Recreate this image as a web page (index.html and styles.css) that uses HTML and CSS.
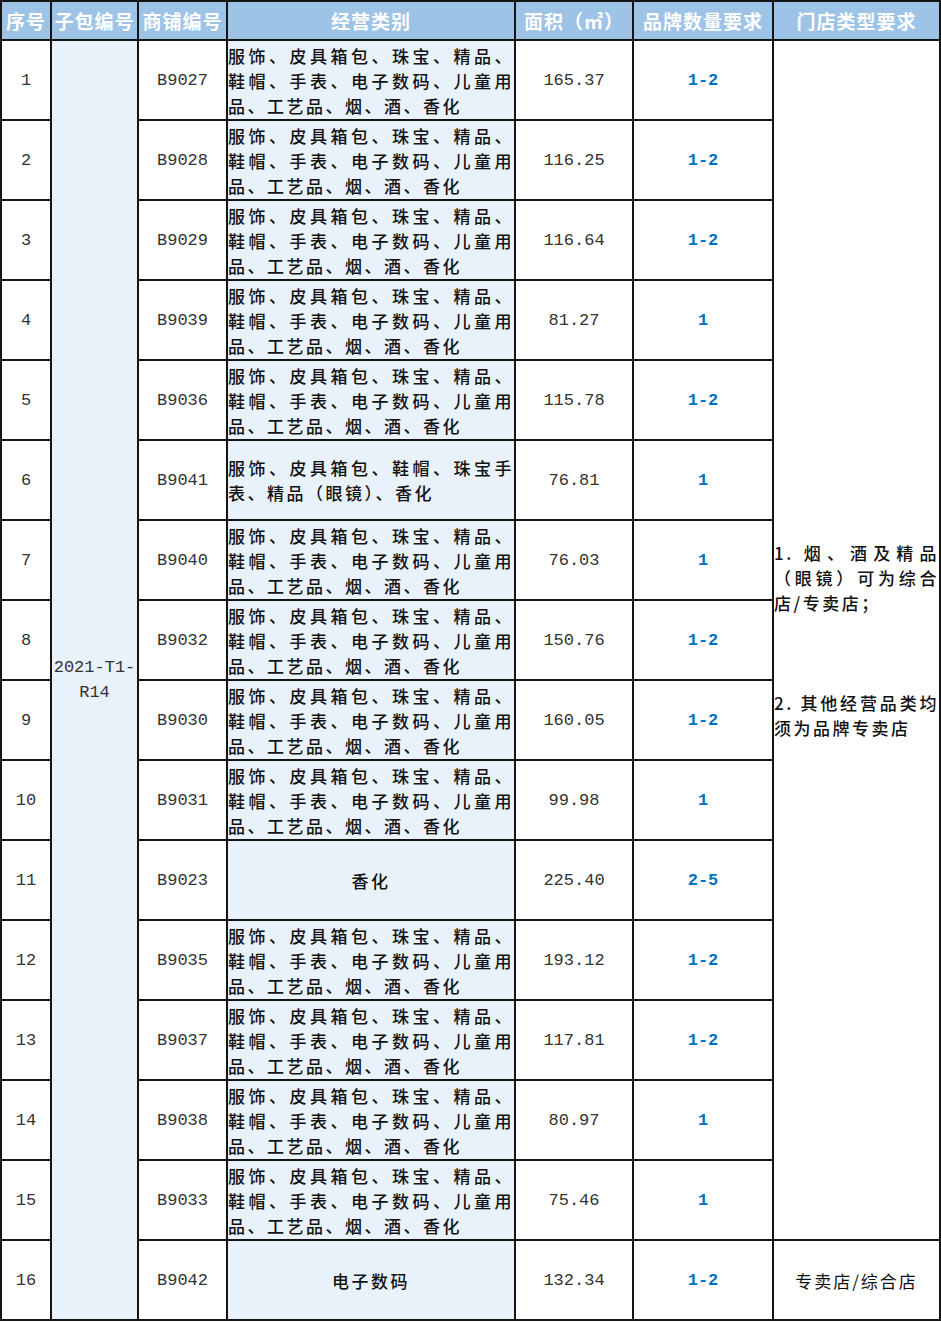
FILE: index.html
```html
<!DOCTYPE html>
<html lang="zh-CN">
<head>
<meta charset="utf-8">
<title>商铺招商表</title>
<link rel="stylesheet" href="styles.css">
</head>
<body>
<table class="grid">
  <colgroup>
    <col class="c-no">
    <col class="c-pkg">
    <col class="c-shop">
    <col class="c-cat">
    <col class="c-area">
    <col class="c-brand">
    <col class="c-type">
  </colgroup>
  <thead>
    <tr class="head">
      <th>序号</th><th>子包编号</th><th>商铺编号</th><th>经营类别</th><th>面积（㎡）</th><th>品牌数量要求</th><th>门店类型要求</th>
    </tr>
  </thead>
  <tbody>
    <tr>
      <td class="num">1</td>
      <td class="num pkg" rowspan="16">2021-T1-R14</td>
      <td class="num">B9027</td>
      <td class="cat">服饰、皮具箱包、珠宝、精品、鞋帽、手表、电子数码、儿童用品、工艺品、烟、酒、香化</td>
      <td class="num">165.37</td>
      <td class="num brand">1-2</td>
      <td class="type" rowspan="15">
        <p class="note">1. 烟、酒及精品（眼镜）可为综合店/专卖店；</p>
        <p class="note note-2">2. 其他经营品类均须为品牌专卖店</p>
      </td>
    </tr>
    <tr><td class="num">2</td><td class="num">B9028</td><td class="cat">服饰、皮具箱包、珠宝、精品、鞋帽、手表、电子数码、儿童用品、工艺品、烟、酒、香化</td><td class="num">116.25</td><td class="num brand">1-2</td></tr>
    <tr><td class="num">3</td><td class="num">B9029</td><td class="cat">服饰、皮具箱包、珠宝、精品、鞋帽、手表、电子数码、儿童用品、工艺品、烟、酒、香化</td><td class="num">116.64</td><td class="num brand">1-2</td></tr>
    <tr><td class="num">4</td><td class="num">B9039</td><td class="cat">服饰、皮具箱包、珠宝、精品、鞋帽、手表、电子数码、儿童用品、工艺品、烟、酒、香化</td><td class="num">81.27</td><td class="num brand">1</td></tr>
    <tr><td class="num">5</td><td class="num">B9036</td><td class="cat">服饰、皮具箱包、珠宝、精品、鞋帽、手表、电子数码、儿童用品、工艺品、烟、酒、香化</td><td class="num">115.78</td><td class="num brand">1-2</td></tr>
    <tr><td class="num">6</td><td class="num">B9041</td><td class="cat">服饰、皮具箱包、鞋帽、珠宝手表、精品（眼镜）、香化</td><td class="num">76.81</td><td class="num brand">1</td></tr>
    <tr><td class="num">7</td><td class="num">B9040</td><td class="cat">服饰、皮具箱包、珠宝、精品、鞋帽、手表、电子数码、儿童用品、工艺品、烟、酒、香化</td><td class="num">76.03</td><td class="num brand">1</td></tr>
    <tr><td class="num">8</td><td class="num">B9032</td><td class="cat">服饰、皮具箱包、珠宝、精品、鞋帽、手表、电子数码、儿童用品、工艺品、烟、酒、香化</td><td class="num">150.76</td><td class="num brand">1-2</td></tr>
    <tr><td class="num">9</td><td class="num">B9030</td><td class="cat">服饰、皮具箱包、珠宝、精品、鞋帽、手表、电子数码、儿童用品、工艺品、烟、酒、香化</td><td class="num">160.05</td><td class="num brand">1-2</td></tr>
    <tr><td class="num">10</td><td class="num">B9031</td><td class="cat">服饰、皮具箱包、珠宝、精品、鞋帽、手表、电子数码、儿童用品、工艺品、烟、酒、香化</td><td class="num">99.98</td><td class="num brand">1</td></tr>
    <tr><td class="num">11</td><td class="num">B9023</td><td class="cat cat-center">香化</td><td class="num">225.40</td><td class="num brand">2-5</td></tr>
    <tr><td class="num">12</td><td class="num">B9035</td><td class="cat">服饰、皮具箱包、珠宝、精品、鞋帽、手表、电子数码、儿童用品、工艺品、烟、酒、香化</td><td class="num">193.12</td><td class="num brand">1-2</td></tr>
    <tr><td class="num">13</td><td class="num">B9037</td><td class="cat">服饰、皮具箱包、珠宝、精品、鞋帽、手表、电子数码、儿童用品、工艺品、烟、酒、香化</td><td class="num">117.81</td><td class="num brand">1-2</td></tr>
    <tr><td class="num">14</td><td class="num">B9038</td><td class="cat">服饰、皮具箱包、珠宝、精品、鞋帽、手表、电子数码、儿童用品、工艺品、烟、酒、香化</td><td class="num">80.97</td><td class="num brand">1</td></tr>
    <tr><td class="num">15</td><td class="num">B9033</td><td class="cat">服饰、皮具箱包、珠宝、精品、鞋帽、手表、电子数码、儿童用品、工艺品、烟、酒、香化</td><td class="num">75.46</td><td class="num brand">1</td></tr>
    <tr><td class="num">16</td><td class="num">B9042</td><td class="cat cat-center">电子数码</td><td class="num">132.34</td><td class="num brand">1-2</td><td class="store">专卖店/综合店</td></tr>
  </tbody>
</table>
</body>
</html>
```

FILE: styles.css
```css
html, body {
  margin: 0;
  padding: 0;
  background: #ffffff;
}

.grid {
  border-collapse: collapse;
  table-layout: fixed;
  width: 941px;
  font-family: "Noto Sans CJK SC", sans-serif;
}

.c-no { width: 50px; }
.c-pkg { width: 87px; }
.c-shop { width: 89px; }
.c-cat { width: 288px; }
.c-area { width: 118px; }
.c-brand { width: 140px; }
.c-type { width: 167px; }

.grid th,
.grid td {
  border: 2px solid #141414;
  padding: 0;
  vertical-align: middle;
}

.head th {
  height: 37px;
  background: #9dc3e6;
  color: #ffffff;
  font-size: 19px;
  font-weight: 700;
  letter-spacing: 1px;
  text-align: center;
  line-height: 24px;
  white-space: nowrap;
}

.grid tbody td {
  height: 78px;
}

.num {
  font-family: "Liberation Mono", "Noto Sans CJK SC", monospace;
  font-size: 17px;
  color: #333333;
  text-align: center;
  line-height: 25px;
}

.pkg {
  background: #e9f1fa;
  word-break: normal;
}

.brand {
  color: #0070c0;
  font-weight: 700;
}

.cat {
  background: #e9f1fa;
  color: #111111;
  font-size: 17px;
  font-weight: 500;
  letter-spacing: 2.5px;
  line-height: 25px;
  text-align: justify;
  padding: 0 1px 0 2px;
}

.cat-center {
  text-align: center;
}

.type {
  padding: 0 2px 0 5px;
}

.note {
  margin: 0;
  color: #111111;
  font-size: 17px;
  font-weight: 500;
  letter-spacing: 2.5px;
  line-height: 25px;
  text-align: justify;
}

.note-2 {
  margin-top: 75px;
}

.store {
  color: #111111;
  font-size: 17px;
  letter-spacing: 2px;
  text-align: center;
  line-height: 25px;
}
```
